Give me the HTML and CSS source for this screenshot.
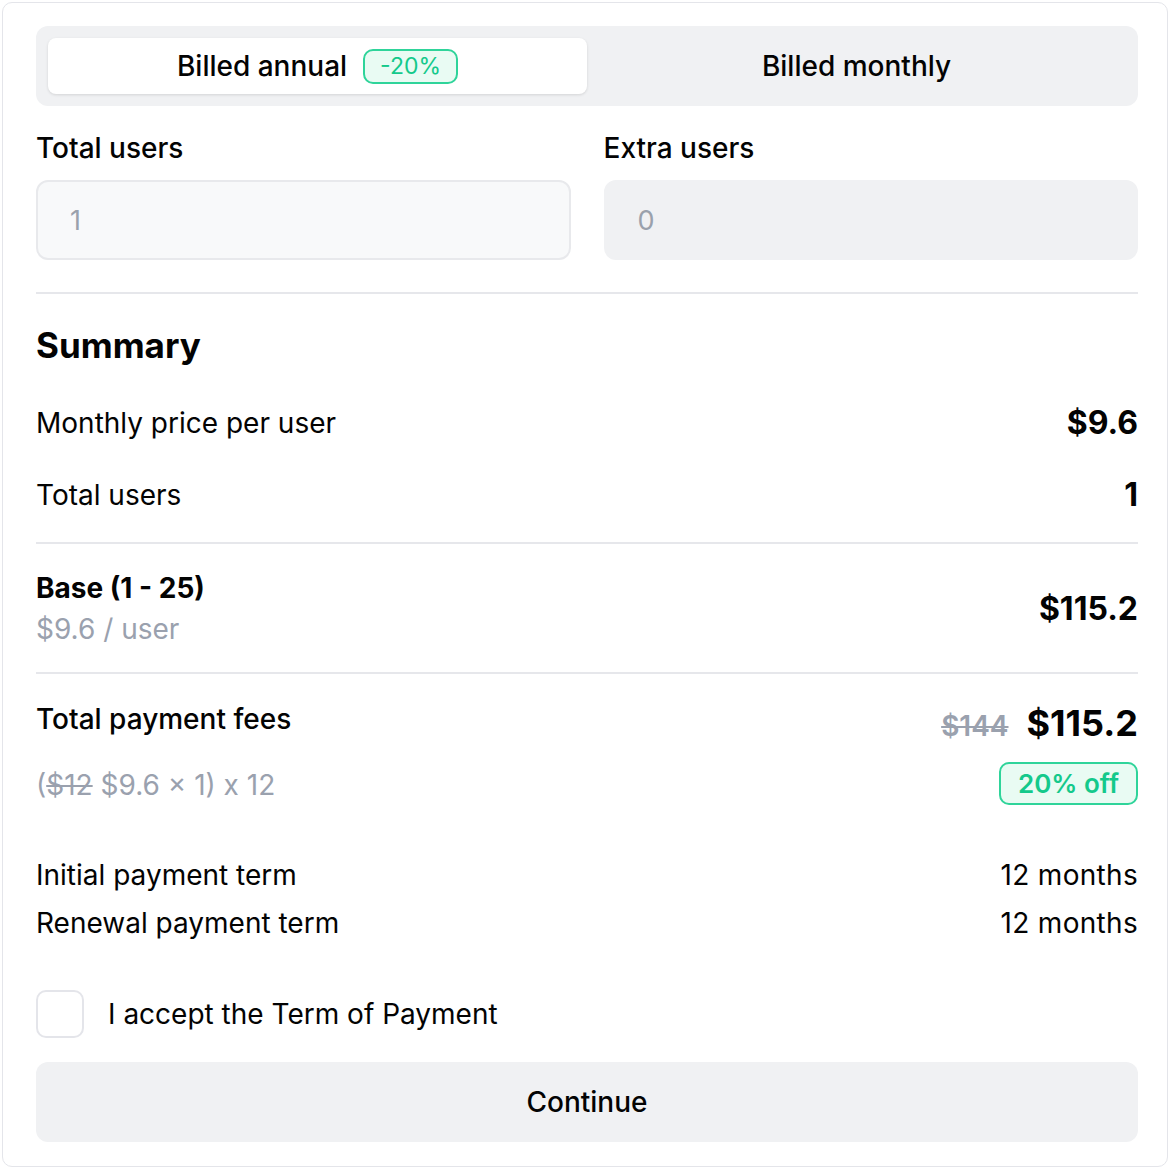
FILE: index.html
```html
<!DOCTYPE html>
<html>
<head>
<meta charset="utf-8">
<link rel="stylesheet" href="styles.css">
</head>
<body>
<div class="card">
  <div class="segment">
    <div class="tab active">Billed annual <span class="badge-sm">-20%</span></div>
    <div class="tab">Billed monthly</div>
  </div>
  <div class="fields">
    <div class="field">
      <div class="label">Total users</div>
      <div class="input">1</div>
    </div>
    <div class="field">
      <div class="label">Extra users</div>
      <div class="input disabled">0</div>
    </div>
  </div>
  <div class="divider first"></div>
  <h2 class="title">Summary</h2>
  <div class="row r1"><span>Monthly price per user</span><span class="val">$9.6</span></div>
  <div class="row r2"><span>Total users</span><span class="val">1</span></div>
  <div class="divider"></div>
  <div class="base">
    <div>
      <div class="strong">Base (1 - 25)</div>
      <div class="muted">$9.6 / user</div>
    </div>
    <div class="val">$115.2</div>
  </div>
  <div class="divider"></div>
  <div class="fees">
    <div class="fees-left">
      <div class="medium">Total payment fees</div>
      <div class="muted calc">(<s>$12</s> $9.6 × 1) x 12</div>
    </div>
    <div class="fees-right">
      <div class="prices"><s class="old">$144</s><span class="big">$115.2</span></div>
      <span class="badge">20% off</span>
    </div>
  </div>
  <div class="terms">
    <div class="term"><span>Initial payment term</span><span class="months">12 months</span></div>
    <div class="term"><span>Renewal payment term</span><span class="months">12 months</span></div>
  </div>
  <label class="check"><span class="box"></span><span>I accept the Term of Payment</span></label>
  <button class="btn">Continue</button>
</div>
</body>
</html>
```
FILE: styles.css
```css
* { box-sizing: border-box; }
html, body { margin: 0; padding: 0; background: #fff; }
body {
  font-family: Inter, "Noto Sans", sans-serif;
  color: #030303;
  padding: 2px;
}
.card {
  width: 1166px;
  border: 1px solid #e4e5ea;
  border-radius: 10px;
  padding: 23px 29px 24px 33px;
}
.segment {
  display: grid;
  grid-template-columns: 1fr 1fr;
  background: #f0f1f3;
  border-radius: 12px;
  padding: 12px;
  height: 80px;
}
.tab {
  display: flex;
  align-items: center;
  justify-content: center;
  gap: 16px;
  font-size: 28px;
  font-weight: 500;
  border-radius: 8px;
  height: 56px;
}
.tab.active {
  background: #fff;
  box-shadow: 0 1px 3px rgba(0,0,0,0.12);
}
.badge-sm {
  display: inline-flex;
  align-items: center;
  height: 35px;
  padding: 0 15px;
  border: 2px solid #2fd49a;
  background: #e9fbf3;
  border-radius: 10px;
  color: #14c98b;
  font-size: 23px;
  font-weight: 400;
}
.fields {
  display: grid;
  grid-template-columns: 1fr 1fr;
  gap: 33px;
  margin-top: 26px;
}
.label {
  font-size: 28px;
  font-weight: 500;
  line-height: 32px;
  margin-bottom: 16px;
}
.input {
  height: 80px;
  border-radius: 12px;
  background: #f8f9fa;
  border: 2px solid #e8e9ec;
  color: #9aa1ac;
  font-size: 27px;
  display: flex;
  align-items: center;
  padding-left: 32px;
}
.input.disabled {
  background: #f0f1f3;
  border-color: #f0f1f3;
}
.divider {
  height: 2px;
  background: #e6e7eb;
}
.divider.first { margin-top: 32px; }
.title {
  font-size: 35px;
  font-weight: 700;
  margin: 30px 0 0;
  line-height: 42px;
}
.row {
  display: flex;
  justify-content: space-between;
  align-items: center;
  font-size: 28px;
  line-height: 36px;
}
.row.r1 { margin-top: 39px; }
.row.r2 { margin-top: 36px; margin-bottom: 29px; }
.val { font-weight: 700; font-size: 32px; }
.base {
  display: flex;
  justify-content: space-between;
  align-items: center;
  padding: 26px 0 25px;
}
.strong { font-size: 28px; font-weight: 700; line-height: 36px; }
.medium { font-size: 28px; font-weight: 500; line-height: 36px; }
.muted { font-size: 28px; color: #9aa1ae; line-height: 36px; margin-top: 5px; }
.fees {
  display: flex;
  justify-content: space-between;
  padding-top: 27px;
  height: 135px;
}
.calc { margin-top: 30px; }
.fees-right {
  display: flex;
  flex-direction: column;
  align-items: flex-end;
}
.prices { display: flex; align-items: baseline; gap: 18px; line-height: 46px; margin-top: -1px; }
.old { color: #9aa1ae; font-size: 28px; font-weight: 600; }
.big { font-size: 36px; font-weight: 700; }
.badge {
  margin-top: 13px;
  display: inline-flex;
  align-items: center;
  height: 43px;
  padding: 0 17px;
  border: 2px solid #2fd49a;
  background: #e9fbf3;
  border-radius: 10px;
  color: #14c98b;
  font-size: 26px;
  font-weight: 600;
}
.terms { margin-top: 42px; }
.term {
  display: flex;
  justify-content: space-between;
  font-size: 28px;
  line-height: 48px;
}
.months { letter-spacing: 0.3px; }
.check {
  display: flex;
  align-items: center;
  gap: 24px;
  margin-top: 43px;
  font-size: 28px;
}
.box {
  width: 48px;
  height: 48px;
  border: 2px solid #e4e5ea;
  border-radius: 10px;
  background: #fff;
}
.btn {
  display: block;
  width: 100%;
  height: 80px;
  margin-top: 24px;
  border: 0;
  border-radius: 12px;
  background: #f0f1f3;
  font-family: inherit;
  font-size: 28px;
  font-weight: 500;
  color: #030303;
}
```
